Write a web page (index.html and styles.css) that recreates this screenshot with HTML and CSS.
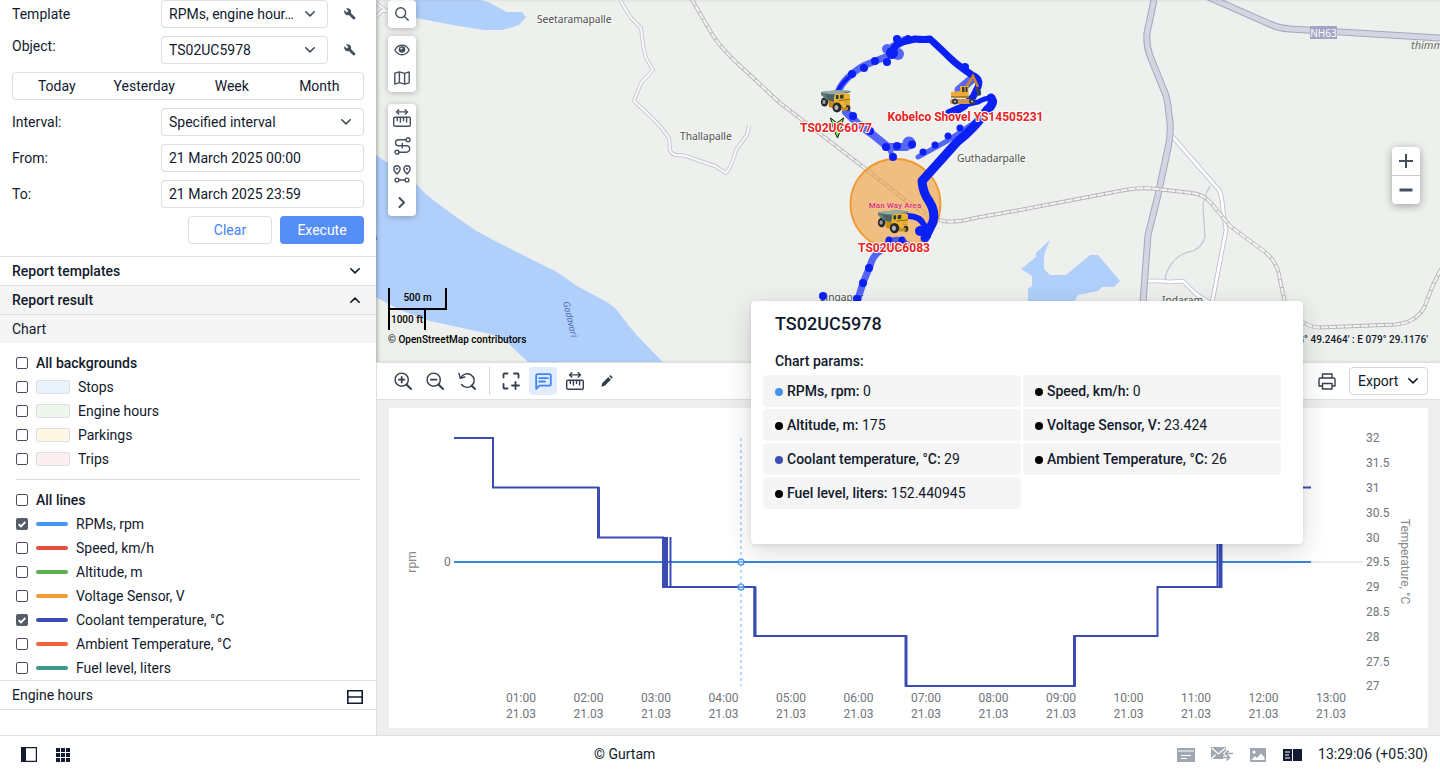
FILE: index.html
```html
<!DOCTYPE html>
<html lang="en">
<head>
<meta charset="utf-8">
<title>Reports</title>
<link rel="stylesheet" href="styles.css">
</head>
<body>
<svg class="defs" aria-hidden="true">
  <symbol id="chev" viewBox="0 0 10 6"><path d="M.8.8 5 4.9 9.2.8" fill="none" stroke="currentColor" stroke-width="1.6" stroke-linecap="round" stroke-linejoin="round"/></symbol>
  <symbol id="wrench" viewBox="0 0 12 12"><path d="M11.4 9.5 6.9 5c.5-1.3.2-2.700-.8-3.700C5 .2 3.400 0 2.100.600L4.400 2.900 2.800 4.500.500 2.200C-.1 3.500.1 5.100 1.200 6.200c1 1 2.500 1.200 3.700.700l4.500 4.500c.2.2.5.2.7 0l1.300-1.200c.2-.2.2-.5 0-.7z" fill="#454f5e"/></symbol>
  <symbol id="check" viewBox="0 0 12 12"><path d="M2.700 6.200 5 8.400 9.400 3.900" fill="none" stroke="#fff" stroke-width="1.900"/></symbol>
  <symbol id="ruler" viewBox="0 0 18 18"><g fill="none" stroke="currentColor" stroke-width="1.400" stroke-linecap="round" stroke-linejoin="round"><path d="M3.600 2.900h10.800M5.700.800 3.600 2.900l2.100 2.100M12.300.800l2.100 2.100-2.100 2.100"/><rect x=".7" y="8.200" width="16.600" height="9" rx="1.200"/><path d="M4.300 8.500v3M7.400 8.500v4.500M10.500 8.500v3M13.600 8.500v4.500"/></g></symbol>
  <symbol id="truck" viewBox="0 0 32 24">
    <ellipse cx="4.500" cy="13" rx="3.600" ry="4.600" fill="#22252a"/><ellipse cx="4" cy="13" rx="1.600" ry="2.200" fill="#999fa3"/>
    <path d="M8 11h12l10-1v9l-11 2-10-3z" fill="#c98a14"/>
    <path d="M1 3 19 1l12 1-2 2-14 2-1 7-7-2-6-5z" fill="#5f7f7c"/><path d="M1 3 18 1l13 1-13 3H9z" fill="#97aaa5"/><path d="M5 5l3 6 6 1V6z" fill="#486461"/>
    <path d="M15 5l8-1 7 1v9l-3 2-10 1-3-5z" fill="#edb22b"/><path d="M16 6h2.500v4H16zM20 6l3.500-.5v4H20z" fill="#2c3b42"/>
    <path d="M22 12l8-1v7l-7 2z" fill="#f3ba3f"/><path d="M24 13.500l5-.7M24 15.500l5-.7" stroke="#b9791a" stroke-width=".6"/>
    <path d="M19 11.500l11-1" stroke="#7a6a30"/>
    <ellipse cx="17" cy="18.500" rx="4.500" ry="5" fill="#25272b"/><ellipse cx="16.400" cy="18.500" rx="2" ry="2.600" fill="#b6b8b8"/>
    <ellipse cx="28" cy="19" rx="2.400" ry="3" fill="#33322f"/><path d="M21 19l7-1v3l-6 1z" fill="#c28d24"/>
  </symbol>
</svg>
<div class="app">
  <aside class="sidebar">
    <div class="form">
      <div class="row"><label>Template</label><div class="select short"><span>RPMs, engine hour…</span><svg class="chev"><use href="#chev"/></svg></div><svg class="wrench"><use href="#wrench"/></svg></div>
      <div class="row"><label class="raised">Object:</label><div class="select short"><span>TS02UC5978</span><svg class="chev"><use href="#chev"/></svg></div><svg class="wrench"><use href="#wrench"/></svg></div>
      <div class="periods"><span>Today</span><span>Yesterday</span><span>Week</span><span>Month</span></div>
      <div class="row"><label>Interval:</label><div class="select"><span>Specified interval</span><svg class="chev"><use href="#chev"/></svg></div></div>
      <div class="row"><label>From:</label><div class="select">21 March 2025 00:00</div></div>
      <div class="row"><label>To:</label><div class="select">21 March 2025 23:59</div></div>
      <div class="actions"><button class="btn clear">Clear</button><button class="btn execute">Execute</button></div>
    </div>
    <div class="bar strong">Report templates<svg class="chev"><use href="#chev"/></svg></div>
    <div class="bar strong shaded">Report result<svg class="chev up"><use href="#chev"/></svg></div>
    <div class="bar shaded">Chart</div>
    <div class="legend">
      <div class="item strong"><i class="box"></i>All backgrounds</div>
      <div class="item"><i class="box"></i><i class="swatch stops"></i>Stops</div>
      <div class="item"><i class="box"></i><i class="swatch engine"></i>Engine hours</div>
      <div class="item"><i class="box"></i><i class="swatch parkings"></i>Parkings</div>
      <div class="item"><i class="box"></i><i class="swatch trips"></i>Trips</div>
      <div class="divider"></div>
      <div class="item strong"><i class="box"></i>All lines</div>
      <div class="item"><svg class="box on"><use href="#check"/></svg><i class="line rpm"></i>RPMs, rpm</div>
      <div class="item"><i class="box"></i><i class="line speed"></i>Speed, km/h</div>
      <div class="item"><i class="box"></i><i class="line altitude"></i>Altitude, m</div>
      <div class="item"><i class="box"></i><i class="line voltage"></i>Voltage Sensor, V</div>
      <div class="item"><svg class="box on"><use href="#check"/></svg><i class="line coolant"></i>Coolant temperature, °C</div>
      <div class="item"><i class="box"></i><i class="line ambient"></i>Ambient Temperature, °C</div>
      <div class="item"><i class="box"></i><i class="line fuel"></i>Fuel level, liters</div>
    </div>
    <div class="bar hours">Engine hours<svg class="split" viewBox="0 0 16 14"><path d="M.8.8h14.400v12.400H.8zM.8 7h14.400" fill="none" stroke="#131c30" stroke-width="1.600"/></svg></div>
    <div class="rest"></div>
  </aside>

  <main class="main">
    <section class="map">
      <svg class="canvas" viewBox="376 0 1064 362">
        <defs>
          <path id="rail" d="M691-2 712 34Q720 47 736 62L780 103 862 166 905 200Q928 217 943 221 955 223 975 218L1020 210 1125 190Q1140 187 1157 189L1192 193Q1203 194 1211 203L1230 226 1265 252Q1278 262 1280 280L1285 303M1298 319Q1310 328 1320 327.500L1395 324.500Q1415 323 1424 308L1433 285 1441 269"/>
          <path id="lanes" d="M620 0 631 18 641 28 643 45 646 58 653 70 641 83 634 101 650 116 660 126 669 138 670 150Q672 156 680 155L686 156 700 161 715 166 726 173Q732 166 736 150L747 135 749 126M376 3 388 12M376 17 382 11H390"/>
          <path id="streets" d="M1172 136 1219 190Q1222 195 1223 210L1226 230 1212 303M1148 281H1162L1170 282 1183 281 1196 294 1210 303"/>
          <path id="highways" d="M1154 0 1147 33Q1146 45 1150 56L1163 88Q1168 98 1169 115 1172 130 1168 148L1158 195 1148 235 1145 275 1143 303M1206-4 1272 25Q1278 28 1290 29L1440 38"/>
        </defs>
        <g class="water">
          <path d="M400 0H480L488 2 507 12 522 12 526 17 519 25 503 30H484L458 26 416 18 400 16z"/>
          <path d="M376 155 388 163 416 184 427 195Q440 206 475 230 490 239 557 272L577 286 605 301Q616 307 622 317 634 333 650 349L663 362H528L512 347Q504 338 490 334L430 321 400 310 376 297z"/>
          <path d="M1050 240 1044 255V269L1050 275H1066L1090 255H1098L1120 281 1114 287H1102L1098 291 1078 295 1072 305H1028V289L1032 286V276L1021 269 1036 257V253z"/>
        </g>
        <use href="#lanes" class="way lane"/><use href="#lanes" class="way lane-fill"/>
        <path class="way thin" d="M1210 186Q1203 198 1203 208L1205 237Q1202 247 1193 251 1180 253 1173 262 1166 270 1165 280"/>
        <use href="#streets" class="way street"/><use href="#streets" class="way street-fill"/>
        <use href="#highways" class="way highway"/><use href="#highways" class="way highway-fill"/>
        <use href="#rail" class="way rail"/><use href="#rail" class="way rail-bed"/><use href="#rail" class="way rail-ties"/>
        <g class="place"><text x="537" y="22.500">Seetaramapalle</text><text x="680" y="139.500">Thallapalle</text><text x="957" y="161.500">Guthadarpalle</text><text x="1162" y="304">Indaram</text><text x="820" y="301">Singapur</text></g>
        <rect x="1310" y="26" width="27" height="13" fill="#a3a5c6"/><text class="shield" x="1323.500" y="36.500">NH63</text>
        <text class="area-name" x="1411" y="48.500">thimmapur</text>
        <text class="river" transform="translate(563 302) rotate(77)">Godavari</text>
        <text class="river" transform="translate(368 244) rotate(-25)">ari</text>

        <circle cx="895.500" cy="204" r="45" fill="#f39a33" fill-opacity=".58" stroke="#f09a33" stroke-width="1.800"/>
        <g class="track light">
          <path stroke-width="7" d="M838 92Q842 82 852 74 860 67 868 64L893 54"/>
          <path stroke-width="10" d="M887 49 896 54"/><circle cx="898" cy="54" r="6" class="dot"/>
          <path stroke-width="8" d="M888 50 905 40M846 112 858 124 872 134 888 147 906 147"/><circle cx="909" cy="143" r="6.500" class="dot"/>
          <path stroke-width="5" d="M889 148 893 157M918 157 947 141 978 120"/>
          <path stroke-width="9" d="M959 90 972 79"/>
          <path stroke-width="7" d="M884 247Q895 235 907 245M880 251Q873 255 870 266L863 283 857 302"/>
        </g>
        <g class="track">
          <path stroke-width="4" d="M838 91Q841 84 848 78"/>
          <path stroke-width="7" d="M892 52Q895 43 904 41.500L915 39Q925 40 930 39 942 50 949 57 957 65 972 75 981 79 978 87L973 97 961 108"/>
          <path stroke-width="5" d="M948 112Q962 105 978 102 985 98 991 98"/>
          <path stroke-width="9" d="M991 98Q995 103 987 110 975 128 957 142L940 161 922 181Q923 193 929 201 936 212 933 222L925 238"/>
          <path stroke-width="6" d="M908 216Q920 216 924 225L928 236"/>
          <path stroke-width="4" d="M953 115 966 107"/>
        </g>
        <g class="dots"><circle cx="852" cy="74" r="4"/><circle cx="864" cy="68" r="4"/><circle cx="875" cy="61" r="4"/><circle cx="887" cy="62" r="4"/><circle cx="892" cy="53" r="6"/><circle cx="897" cy="39" r="4"/><circle cx="908" cy="38.500" r="3.500"/><circle cx="965" cy="67" r="4"/><circle cx="853" cy="116" r="4"/><circle cx="870" cy="131" r="4"/><circle cx="886" cy="147" r="4"/><circle cx="897" cy="146" r="4"/><circle cx="912" cy="144.500" r="4"/><circle cx="893" cy="157" r="4"/><circle cx="923" cy="152" r="3.500"/><circle cx="935" cy="145" r="3.500"/><circle cx="948" cy="136" r="3.500"/><circle cx="960" cy="128" r="3.500"/><circle cx="920" cy="231" r="5"/><circle cx="889" cy="240" r="3.500"/><circle cx="902" cy="240" r="3.500"/><circle cx="869" cy="268" r="4"/><circle cx="863" cy="283" r="4"/><circle cx="857" cy="299" r="4"/><circle cx="823" cy="296" r="4"/></g>

        <use href="#truck" x="820" y="89" width="32" height="24"/>
        <use href="#truck" x="877" y="209" width="33" height="25"/>
        <g>
          <path d="M964 91 973 76 978 87" fill="none" stroke="#ce8525" stroke-width="2.600"/><path d="M977 87l4 4v4l-3 1-3-7z" fill="#384450"/>
          <path d="M951 92l9-1v-5h8l1 12-18-1z" fill="#eca838"/><path d="M962 87h2.500v5H962zM965.500 87h2v5h-2z" fill="#393d42"/><path d="M951 97h18" stroke="#744d17"/>
          <rect x="950" y="99" width="25" height="5" rx="2.500" fill="#c89756"/><circle cx="955" cy="101.500" r="3" fill="#383838"/><circle cx="972" cy="101.500" r="3" fill="#383838"/><circle cx="955" cy="101.500" r="1" fill="#ccc"/><circle cx="972" cy="101.500" r="1" fill="#ccc"/>
        </g>
        <path d="M830.500 118 837 123 843.500 118 841 129 837.500 138 833.500 129z" fill="#7df23d" stroke="#111" stroke-width="1"/>
        <g class="unit"><text x="836" y="132">TS02UC6077</text><text x="965.500" y="121">Kobelco Shovel YS14505231</text><text x="894" y="252">TS02UC6083</text></g>
        <text class="zone" x="895" y="207.500">Man Way Area</text>
      </svg>
      <div class="tools">
        <div class="tool-group"><span class="tool"><svg width="14" height="14" viewBox="0 0 14 14"><circle cx="5.700" cy="5.700" r="4.900"/><path d="M9.300 9.300 13.200 13.200"/></svg></span></div>
        <div class="tool-group views"><span class="tool"><svg width="16" height="12" viewBox="0 0 16 12"><path d="M.8 6Q3.500 1.200 8 1.200T15.200 6Q12.500 10.800 8 10.800T.8 6z"/><circle cx="8" cy="5.500" r="2.600" fill="#454f5e"/><circle cx="7.200" cy="4.600" r=".6" stroke="#fff" stroke-width=".8"/></svg></span><span class="tool"><svg width="16" height="14" viewBox="0 0 16 14"><path d="M.8 2.200 5.400.9 10.600 2.400 15.200.9V11.800L10.600 13.100 5.400 11.600.8 13.100zM5.400.9V11.600M10.600 2.400V13.100"/></svg></span></div>
        <div class="tool-group"><span class="tool"><svg width="18" height="18"><use href="#ruler"/></svg></span><span class="tool"><svg width="17" height="18" viewBox="0 0 17 18"><circle cx="14" cy="2.800" r="2"/><circle cx="3" cy="15.200" r="2"/><path d="M12 2.800H4.500a3 3 0 0 0 0 6H12.500a3 3 0 0 1 0 6.400H5M8.300 6.500v4.600" /></svg></span><span class="tool"><svg width="18" height="18" viewBox="0 0 18 18"><path d="M4 9Q.9 5.800.9 3.900a3.100 3.100 0 0 1 6.200 0Q7.100 5.800 4 9zM14 9q-3.100-3.200-3.100-5.100a3.100 3.100 0 0 1 6.200 0Q17.100 5.800 14 9z"/><circle cx="4" cy="3.900" r=".4"/><circle cx="14" cy="3.900" r=".4"/><circle cx="4" cy="15" r="1.900"/><circle cx="14" cy="15" r="1.900"/><path d="M6 15h6"/></svg></span><span class="tool"><svg width="8" height="11" viewBox="0 0 8 11"><path stroke-width="2" d="M1.500 1 6 5.500 1.500 10"/></svg></span></div>
      </div>
      <div class="zoom"><span><svg width="14" height="14" viewBox="0 0 14 14"><path d="M7 0V14M0 7H14"/></svg></span><span><svg width="14" height="14" viewBox="0 0 14 14"><path stroke-width="3" d="M.5 7H13.500"/></svg></span></div>
      <div class="scale"><div class="metric">500 m</div><div class="imperial">1000 ft</div><div class="credit">© OpenStreetMap contributors</div></div>
      <div class="coords">N 18° 49.2464' : E 079° 29.1176'</div>
    </section>

    <section class="panel">
      <div class="toolbar">
        <span class="ico"><svg width="18" height="18" viewBox="0 0 18 18"><circle cx="7.700" cy="7.700" r="6.600"/><path stroke-width="2" d="M12.500 12.500 17 17"/><path class="bold" d="M7.700 4.900v5.600M4.900 7.700h5.600"/></svg></span>
        <span class="ico"><svg width="18" height="18" viewBox="0 0 18 18"><circle cx="7.700" cy="7.700" r="6.600"/><path stroke-width="2" d="M12.500 12.500 17 17"/><path class="bold" d="M4.900 7.700h5.600"/></svg></span>
        <span class="ico"><svg width="18" height="18" viewBox="0 0 18 18"><path d="M2.700 6A7 6.800 0 1 1 3.500 12.500M1 1.500 2.300 6.200 6.800 5"/><path stroke-width="2" d="M13.500 13.500 17 17"/></svg></span>
        <i class="sep"></i>
        <span class="ico"><svg width="18" height="18" viewBox="0 0 18 18"><path class="bold" d="M1.500 5.500V2.500a1 1 0 0 1 1-1H5.500M12 1.500h3.500a1 1 0 0 1 1 1V5.500M1.500 12v3.500a1 1 0 0 0 1 1H5.500M13.500 10v7M10 13.500h7"/></svg></span>
        <span class="ico active"><svg width="17" height="17" viewBox="0 0 17 17"><path class="bold" d="M1.200 15.800V2.600Q1.200 1.200 2.600 1.200H14.400Q15.800 1.200 15.800 2.600V11.200Q15.800 12.600 14.400 12.600H4.500zM4.200 5.200H13M4.200 8.500H10"/></svg></span>
        <span class="ico"><svg width="18" height="18"><use href="#ruler"/></svg></span>
        <span class="ico"><svg width="12" height="12" viewBox="0 0 12 12"><path d="M.3 11.700 1.200 8.200 7.300 2.100 9.900 4.700 3.800 10.800zM8.200 1.300 9.400.1 11.900 2.600 10.700 3.800z" fill="#353e4e" stroke="none"/></svg></span>
        <span class="push"></span>
        <span class="ico print"><svg width="18" height="17" viewBox="0 0 18 17"><path d="M4.500 5V1h9.500v4M4.500 13H1V6.500Q1 5 2.500 5H15.500Q17 5 17 6.500V13H14M4.500 10.500h9.500V16H4.500z"/></svg></span>
        <button class="export">Export<svg class="chev"><use href="#chev"/></svg></button>
      </div>
      <div class="chart-wrap">
        <svg class="chart" viewBox="389 408 1039 320">
          <path d="M1311 562h52" stroke="#eaeaea" stroke-width="2"/>
          <path d="M454 562H1311" stroke="#3a86dc" stroke-width="2"/>
          <g class="temp">
            <path d="M454 438H493V487.500H598V537.500H664M664 587H754.500V636H906V686H1074.500V636H1157.500V587H1219M1219 587V487.500H1311"/>
            <path stroke-width="3" d="M598.500 487V538M755 586.500V636.500M906 635.500V686.500M1074.500 635.500V686.500"/>
            <path class="thick" d="M665 537V588"/><path d="M670.500 537V587"/>
            <path class="thick" d="M1219.500 500V588"/><path class="gap" d="M1218.500 500V586"/>
          </g>
          <path d="M741 438V686" stroke="#b4d5fa" stroke-width="1.800" stroke-dasharray="3 3"/>
          <g fill="#d9eaff" fill-opacity=".5" stroke="#3f90e8" stroke-width="1.200"><circle cx="741" cy="562" r="3"/><circle cx="741" cy="587" r="3"/></g>
          <g class="axis"><text x="1366" y="442">32</text><text x="1366" y="467">31.5</text><text x="1366" y="491.500">31</text><text x="1366" y="516.500">30.5</text><text x="1366" y="541.500">30</text><text x="1366" y="566">29.5</text><text x="1366" y="591">29</text><text x="1366" y="615.500">28.5</text><text x="1366" y="640.500">28</text><text x="1366" y="665.500">27.5</text><text x="1366" y="690">27</text><text x="444" y="566">0</text></g>
          <g class="axis mid">
            <text x="521" y="702">01:00</text><text x="521" y="718">21.03</text><text x="588.500" y="702">02:00</text><text x="588.500" y="718">21.03</text><text x="656" y="702">03:00</text><text x="656" y="718">21.03</text><text x="723.500" y="702">04:00</text><text x="723.500" y="718">21.03</text><text x="791" y="702">05:00</text><text x="791" y="718">21.03</text><text x="858.500" y="702">06:00</text><text x="858.500" y="718">21.03</text><text x="926" y="702">07:00</text><text x="926" y="718">21.03</text><text x="993.500" y="702">08:00</text><text x="993.500" y="718">21.03</text><text x="1061" y="702">09:00</text><text x="1061" y="718">21.03</text><text x="1128.500" y="702">10:00</text><text x="1128.500" y="718">21.03</text><text x="1196" y="702">11:00</text><text x="1196" y="718">21.03</text><text x="1263.500" y="702">12:00</text><text x="1263.500" y="718">21.03</text><text x="1331" y="702">13:00</text><text x="1331" y="718">21.03</text>
          </g>
          <g class="axis title mid"><text transform="translate(416 562) rotate(-90)">rpm</text><text transform="translate(1401 561.500) rotate(90)">Temperature, °C</text></g>
        </svg>
      </div>
    </section>
    <div class="popup">
      <h2>TS02UC5978</h2>
      <h3>Chart params:</h3>
      <div class="params">
        <div><i class="b-rpm"></i><b>RPMs, rpm:</b> 0</div><div><i></i><b>Speed, km/h:</b> 0</div>
        <div><i></i><b>Altitude, m:</b> 175</div><div><i></i><b>Voltage Sensor, V:</b> 23.424</div>
        <div><i class="b-coolant"></i><b>Coolant temperature, °C:</b> 29</div><div><i></i><b>Ambient Temperature, °C:</b> 26</div>
        <div><i></i><b>Fuel level, liters:</b> 152.440945</div>
      </div>
    </div>
  </main>

  <footer class="footer">
    <div class="left"><svg width="16" height="15" viewBox="0 0 16 15"><path d="M.6.6h14.800v13.800H.6z" fill="#fff" stroke="#131c30" stroke-width="1.200"/><path d="M0 0h5v15H0z" fill="#131c30"/></svg>
    <svg width="14" height="14" viewBox="0 0 14 14"><path fill="#131c30" d="M0 0h4v4H0zM5 0h4v4H5zM10 0h4v4h-4zM0 5h4v4H0zM5 5h4v4H5zM10 5h4v4h-4zM0 10h4v4H0zM5 10h4v4H5zM10 10h4v4h-4z"/></svg></div>
    <div class="brand">© Gurtam</div>
    <div class="right">
      <svg width="18" height="14" viewBox="0 0 18 14"><path fill="#a1a7b0" d="M0 0h18v14H0z"/><path d="M1 3h16M4 7.500h10M4 10.500h6" stroke="#fff" stroke-width="1.200"/></svg>
      <svg class="mail" width="23" height="15" viewBox="0 0 23 15"><path fill="#a1a7b0" d="M0 0h15v12H0z"/><path d="M.8 1 7.500 7 14.200 1M.5 12 4.500 7.500" fill="none" stroke="#fff" stroke-width="1.200"/><path d="M22 6.500h-7M17.500 3.500l-3 3 3 3M12 10.500h6M15.500 7.500l3 3-3 3" fill="none" stroke="#fff" stroke-width="3.600"/><path d="M22 6.500h-7M17.500 3.500l-3 3 3 3M12 10.500h6M15.500 7.500l3 3-3 3" fill="none" stroke="#a1a7b0" stroke-width="1.700"/></svg>
      <svg class="pic" width="16" height="14" viewBox="0 0 16 14"><path fill="#a1a7b0" d="M0 0h16v14H0z"/><circle cx="4" cy="4" r="1.600" fill="#fff"/><path d="M1.500 12 5 8l2 2 4-4.500 3.500 4V12z" fill="#fff"/></svg>
      <svg class="dual" width="19" height="12" viewBox="0 0 19 12"><path fill="#131c30" d="M0 0h9v12H0zM10 0h9v12h-9z"/><path d="M2 3h5M2 6h4M2 9h5" stroke="#fff" stroke-width="1.200"/></svg>
      <span class="clock">13:29:06 (+05:30)</span>
    </div>
  </footer>
</div>
</body>
</html>
```
FILE: styles.css
```css
* { box-sizing: border-box; }
body { margin: 0; width: 1440px; height: 772px; overflow: hidden; background: #fff; color: #111a2c; font: 14px/20px Roboto, sans-serif; }
svg { display: block; }
.defs { position: absolute; width: 0; height: 0; }
.app { display: grid; grid-template: 735px 37px / 376px 1064px; }
button { font: inherit; color: inherit; background: #fff; padding: 0; }

.sidebar { display: flex; flex-direction: column; overflow: hidden; }
.form { height: 256px; padding: 0 12px; display: flex; flex-direction: column; gap: 8px; flex: none; }
.row { display: flex; align-items: center; height: 28px; }
.row label { width: 149px; }
.row .raised { padding-bottom: 8px; }
.select { flex: 1; height: 28px; border: 1px solid #dcdee0; border-radius: 4px; padding: 0 7px; display: flex; align-items: center; justify-content: space-between; }
.select .chev { margin-right: 5px; color: #454f5e; }
.short { flex: 0 0 167px; }
.chev { width: 10px; height: 6px; }
.wrench { width: 12px; height: 12px; margin-left: 16px; }
.periods { height: 28px; display: grid; grid-template-columns: repeat(4, 1fr); align-items: center; text-align: center; border: 1px solid #dcdee0; border-radius: 4px; }
.actions { display: flex; justify-content: flex-end; gap: 8px; }
.btn { width: 84px; height: 28px; border-radius: 4px; }
.clear { border: 1px solid #dcdee0; color: #3f83f8; }
.execute { border: 0; background: #568ef8; color: #fff; }
.bar { height: 29px; flex: none; border-top: 1px solid #dcdee0; padding: 0 16px 0 12px; display: flex; align-items: center; justify-content: space-between; }
.strong { font-weight: 500; }
.shaded { background: #f5f5f5; }
.up { transform: rotate(180deg); }
.legend { height: 337px; padding: 8px 16px 0; flex: none; }
.item { display: flex; align-items: center; height: 24px; }
.box { width: 12px; height: 12px; border: 1px solid #454f5e; border-radius: 2px; margin-right: 8px; flex: none; }
.box.on { background: #535c69; border: 0; }
.swatch { width: 34px; height: 14px; border: 1px solid #dddfe1; border-radius: 2px; margin-right: 8px; }
.stops { background: #e8f3fd; }
.engine { background: #eff6ee; }
.parkings { background: #fff7e3; }
.trips { background: #fbf0f1; }
.divider { height: 1px; background: #dcdcdc; margin: 8px 0; }
.line { width: 32px; height: 4px; border-radius: 2px; margin-right: 8px; }
.rpm { background: #4597ef; }
.speed { background: #e44f3f; }
.altitude { background: #5fad51; }
.voltage { background: #f39b33; }
.coolant { background: #3c4db4; }
.ambient { background: #f16338; }
.fuel { background: #3f9787; }
.hours { padding-right: 13px; }
.split { width: 16px; height: 14px; margin-top: 4px; }
.rest { flex: 1; border-top: 1px solid #dcdee0; }

.main { position: relative; display: flex; flex-direction: column; min-width: 0; }
.map { position: relative; height: 362px; background: #edf0ec; overflow: hidden; }
.map::after { content: ""; position: absolute; inset: 0; pointer-events: none; box-shadow: inset 3px 0 4px -2px #0005; }
.canvas { position: absolute; inset: 0; width: 1064px; height: 362px; }
.water { fill: #b0d0fb; }
.way, .track { fill: none; stroke-linejoin: round; }
.lane { stroke: #c8c9d6; stroke-width: 4; }
.lane-fill { stroke: #fafafa; stroke-width: 2; }
.thin { stroke: #c3c4d4; stroke-width: 1.2; }
.street { stroke: #bcbdd2; stroke-width: 4.5; }
.street-fill { stroke: #fff; stroke-width: 2.8; }
.highway { stroke: #a5a7c2; stroke-width: 7; }
.highway-fill { stroke: #d5d5e1; stroke-width: 5; }
.rail { stroke: #b9b6ba; stroke-width: 4; }
.rail-bed { stroke: #f3f4f2; stroke-width: 2.2; }
.rail-ties { stroke: #b9b6ba; stroke-width: 3; stroke-dasharray: 1 7; }
.place { font: 10.200px "Noto Sans", sans-serif; fill: #4e504e; stroke: #f5f6f4; stroke-width: 2px; paint-order: stroke; }
.shield { font: 10px "Noto Sans", sans-serif; fill: #fff; text-anchor: middle; }
.area-name { font: italic 11px "Noto Sans", sans-serif; fill: #6c6f6b; }
.river { font: italic 9px "Noto Sans", sans-serif; fill: #4c67b4; }
.track { stroke: #0a20f4; stroke-linecap: round; }
.track.light { stroke: #2238fb; opacity: .75; }
.dot { fill: #2238fb; stroke: none; }
.dots { fill: #0a20f4; }
.unit { font: 700 12px Roboto, sans-serif; fill: #e8221c; stroke: #fff; stroke-width: 2px; paint-order: stroke; stroke-linejoin: round; text-anchor: middle; }
.zone { font: 500 8px Roboto, sans-serif; letter-spacing: .1px; fill: #d8256e; stroke: #fbdcc0; stroke-width: .6px; paint-order: stroke; text-anchor: middle; }
.tools { position: absolute; left: 12px; top: 0; display: flex; flex-direction: column; gap: 12px; }
.tool-group { width: 28px; background: #fff; border-radius: 4px; box-shadow: 0 1px 6px #0004; }
.tool-group:first-child { margin-bottom: -4px; }
.tool { height: 28px; display: flex; align-items: center; justify-content: center; color: #454f5e; }
.tool svg, .ico svg { fill: none; stroke: #454f5e; stroke-width: 1.4; stroke-linejoin: round; stroke-linecap: round; overflow: visible; }
.bold { stroke-width: 1.8; }
.zoom { position: absolute; right: 20px; top: 147px; width: 28px; background: #fff; border-radius: 4px; box-shadow: 0 2px 8px #0005; }
.zoom span { height: 28px; display: flex; align-items: center; justify-content: center; }
.zoom span + span { height: 29px; border-top: 1px solid #ccc; }
.zoom svg { stroke: #454f5e; stroke-width: 2; }
.scale { position: absolute; left: 12px; top: 288px; color: #000; font: 500 10px/20px Roboto, sans-serif; }
.metric { width: 59px; height: 22px; border: 2px solid #000; border-top: 0; text-align: center; }
.imperial { width: 38px; height: 20px; border: 2px solid #000; border-width: 0 2px; text-align: center; white-space: nowrap; }
.credit { line-height: 20px; letter-spacing: .03px; }
.coords { position: absolute; right: 12px; top: 330px; font: 500 10px/20px Roboto, sans-serif; letter-spacing: .05px; }

.panel { height: 373px; border: 1px solid #dcdee0; border-width: 1px 0 0 1px; background: #eee; display: flex; flex-direction: column; }
.toolbar { height: 37px; background: #fff; border-bottom: 1px solid #dcdee0; padding: 0 12px; display: flex; align-items: center; flex: none; }
.ico { width: 28px; height: 28px; margin-right: 4px; display: flex; align-items: center; justify-content: center; color: #353e4e; border-radius: 4px; }
.ico svg { stroke: #353e4e; }
.sep { width: 1px; height: 28px; background: #d5d7da; margin: 0 7px 0 4px; }
.ico.active { background: #e1ecfe; }
.ico.active svg { stroke: #3f83f8; }
.push { flex: 1; }
.print { margin-right: 8px; }
.export { width: 79px; height: 28px; border: 1px solid #d5d7da; border-radius: 4px; padding: 0 9px 0 8px; display: flex; align-items: center; justify-content: space-between; }
.chart-wrap { padding: 8px 12px; }
.chart { width: 1039px; height: 320px; background: #fff; }
.temp { fill: none; stroke: #394cb4; stroke-width: 2; }
.thick { stroke-width: 6; }
.gap { stroke: #7e88cf; stroke-width: 1; }
.axis { font: 12px Roboto, sans-serif; fill: #70747b; }
.mid { text-anchor: middle; }
.title { fill: #888; }

.popup { position: absolute; left: 375px; top: 301px; width: 552px; height: 243px; background: #fff; border-radius: 4px; box-shadow: 0 8px 28px #00000026, 0 1px 4px #0000001a; padding: 11px 22px 0 12px; }
.popup h2 { margin: 0 12px; font: 500 18px/24px Roboto, sans-serif; }
.popup h3 { margin: 15px 12px 4px; font: 500 14px/20px Roboto, sans-serif; }
.params { display: grid; grid-template-columns: 258px 258px; gap: 2px; }
.params div { height: 32px; background: #f5f5f5; border-radius: 4px; padding-left: 12px; display: flex; align-items: center; white-space: pre; }
.params i { width: 8px; height: 8px; border-radius: 50%; background: #000; margin: 2px 4px 0 0; }
.params b { font-weight: 500; }
.params .b-rpm { background: #4294ea; }
.params .b-coolant { background: #3d4eb3; }

.footer { grid-column: 1 / 3; border-top: 1px solid #dcdee0; padding-top: 1px; display: grid; grid-template-columns: 594px auto 1fr; align-items: center; }
.left { display: flex; gap: 19px; padding-left: 21px; align-items: center; }
.brand, .clock { padding-bottom: 1px; }
.right { display: flex; justify-content: flex-end; align-items: center; padding-right: 12px; }
.mail { margin-left: 16px; }
.pic { margin: 0 17px 0 16px; }
.dual { margin-right: 16px; }
```
